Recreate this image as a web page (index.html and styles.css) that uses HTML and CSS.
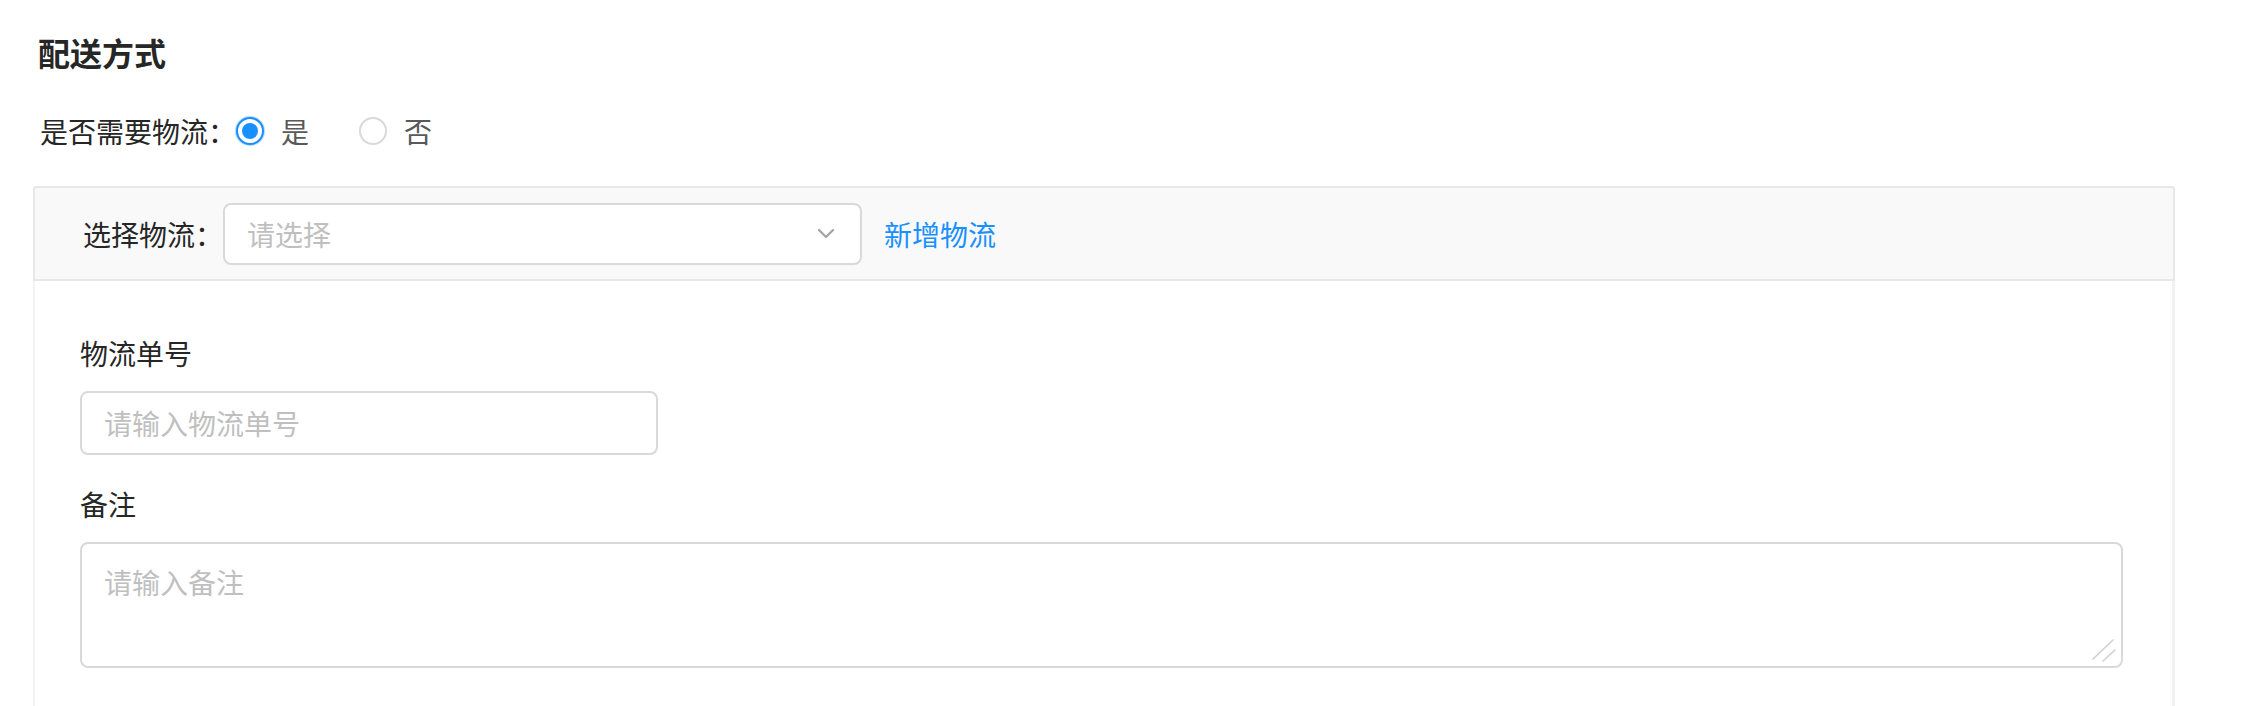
FILE: index.html
```html
<!DOCTYPE html>
<html lang="zh-CN">
<head>
<meta charset="utf-8">
<title>配送方式</title>
<link rel="stylesheet" href="styles.css">
</head>
<body>
<div class="page">
  <h2 class="title">配送方式</h2>
  <div class="radio-row">
    <span class="row-label">是否需要物流：</span>
    <label class="radio checked"><span class="radio-dot"></span><span class="radio-text">是</span></label>
    <label class="radio"><span class="radio-dot"></span><span class="radio-text">否</span></label>
  </div>
  <div class="panel">
    <div class="panel-head">
      <span class="row-label">选择物流：</span>
      <div class="select">
        <span class="placeholder">请选择</span>
        <svg class="chevron" viewBox="0 0 18 11" width="18" height="11"><path d="M2 2 L9 9 L16 2" fill="none" stroke="#a6a6a6" stroke-width="2.4" stroke-linecap="round" stroke-linejoin="round"/></svg>
      </div>
      <a class="link">新增物流</a>
    </div>
    <div class="panel-body">
      <div class="form-item">
        <div class="form-label">物流单号</div>
        <input class="input" type="text" placeholder="请输入物流单号">
      </div>
      <div class="form-item">
        <div class="form-label">备注</div>
        <div class="textarea-wrap">
          <textarea class="textarea" placeholder="请输入备注"></textarea>
          <svg class="grip" viewBox="0 0 26 24" width="26" height="24"><path d="M2 21 L22 2 M12 23 L24 12" fill="none" stroke="#cfcfcf" stroke-width="1.6" stroke-linecap="round"/></svg>
        </div>
      </div>
    </div>
  </div>
</div>
</body>
</html>
```
FILE: styles.css
```css
* { box-sizing: border-box; }
html, body { margin: 0; padding: 0; background: #fff; }
body {
  font-family: "Noto Sans CJK SC", "Noto Sans", sans-serif;
  font-size: 28px;
  color: #262626;
  overflow: hidden;
}
.page {
  padding: 28px 67px 0 33px;
}
.title {
  margin: 0;
  padding-left: 5px;
  font-size: 32px;
  line-height: 48px;
  font-weight: 700;
  color: #262626;
}
.radio-row {
  margin-top: 33px;
  padding-left: 7px;
  display: flex;
  align-items: center;
  height: 44px;
  line-height: 44px;
}
.row-label { color: #262626; white-space: nowrap; }
.radio {
  display: flex;
  align-items: center;
  margin-right: 50px;
}
.radio-dot {
  width: 28px;
  height: 28px;
  border-radius: 50%;
  border: 2px solid #d9d9d9;
  background: #fff;
  display: flex;
  align-items: center;
  justify-content: center;
}
.radio.checked .radio-dot {
  border-color: #1890ff;
  box-shadow: 0 0 1px 1px rgba(24, 144, 255, 0.35);
}
.radio.checked .radio-dot::after {
  content: "";
  width: 16px;
  height: 16px;
  border-radius: 50%;
  background: #1890ff;
}
.radio-text {
  margin-left: 17px;
  color: #595959;
}
.panel {
  margin-top: 33px;
}
.panel-head {
  height: 95px;
  background: #f9f9f9;
  border: 2px solid #e8e8e8;
  border-radius: 3px 3px 0 0;
  display: flex;
  align-items: center;
  padding-left: 48px;
}
.select {
  width: 639px;
  height: 62px;
  border: 2px solid #d9d9d9;
  border-radius: 8px;
  background: #fff;
  display: flex;
  align-items: center;
  justify-content: space-between;
  padding: 0 25px 0 22px;
}
.placeholder { color: #bfbfbf; }
.chevron { display: block; }
.link {
  margin-left: 22px;
  color: #1890ff;
  cursor: pointer;
}
.panel-body {
  border-left: 2px solid #f2f2f2;
  border-right: 3px solid #f2f2f2;
  padding: 50px 49px 80px 45px;
  background: linear-gradient(to bottom, #fff 0, #fff 640px, #fbfbfb 100%);
}
.form-item + .form-item { margin-top: 27px; }
.form-label {
  line-height: 44px;
  margin-bottom: 16px;
  color: #262626;
}
.input, .textarea {
  font-family: "Noto Sans CJK SC", "Noto Sans", sans-serif;
  font-size: 28px;
  color: #262626;
  border: 2px solid #d9d9d9;
  border-radius: 8px;
  background: #fff;
  outline: none;
  display: block;
  margin: 0;
}
.input {
  width: 578px;
  height: 64px;
  padding: 0 22px;
}
.textarea-wrap {
  position: relative;
}
.textarea {
  width: 100%;
  height: 126px;
  padding: 16px 22px;
  line-height: 44px;
  resize: none;
}
.grip {
  position: absolute;
  right: 6px;
  bottom: 6px;
  pointer-events: none;
}
.input::placeholder, .textarea::placeholder { color: #bfbfbf; }
```
